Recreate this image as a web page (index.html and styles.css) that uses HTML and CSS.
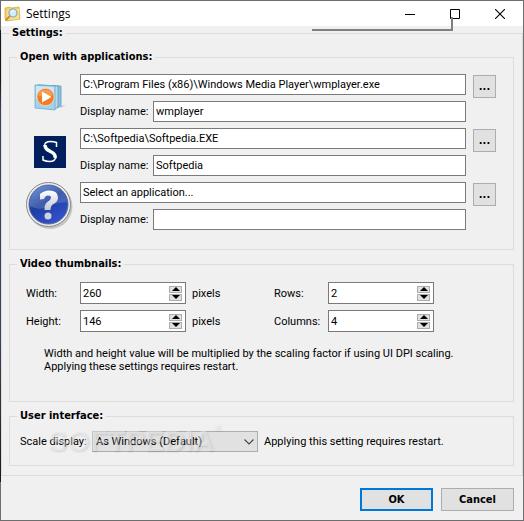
FILE: index.html
```
<!DOCTYPE html>
<html lang="en">
<head>
    <meta charset="UTF-8">
    <meta name="viewport" content="width=device-width, initial-scale=1.0">
    <title>Settings</title>
    <link rel="stylesheet" href="styles.css">
</head>
<body>
    <form class="window">
        <header class="title-bar">
            <svg class="title-icon" width="17" height="16" viewBox="0 0 17 16">
                <path d="M1 2l5-1 1 1 8-1 1 12-13 2-2-2z" fill="#f3cf62" stroke="#d6a63a" stroke-width=".7"/>
                <path d="M3 4l12-1v10L3 14z" fill="#fbe08a"/>
                <path d="M6 10l-4 4" stroke="#c98e3d" stroke-width="2" stroke-linecap="round"/>
                <circle cx="9" cy="7" r="4" fill="#d4ecfb" stroke="#7fa9c9" stroke-width="1.2"/>
                <path d="M7 6q1-2 3-1.500" stroke="#fff" fill="none"/>
            </svg>
            <h1>Settings</h1>
            <div class="window-buttons">
                <button type="button" aria-label="Minimize">
                    <svg width="10" height="10" viewBox="0 0 10 10"><path d="M0 5.500h10" stroke="#000"/></svg>
                </button>
                <button type="button" aria-label="Maximize">
                    <svg width="10" height="10" viewBox="0 0 10 10"><path d="M.5.5h9v9h-9z" fill="none" stroke="#000"/></svg>
                </button>
                <button type="button" aria-label="Close">
                    <svg width="10" height="10" viewBox="0 0 10 10"><path d="M0 0l10 10M10 0L0 10" stroke="#000" stroke-width="1.100"/></svg>
                </button>
            </div>
            <div class="popup-shadow"></div>
        </header>

        <fieldset class="settings">
            <legend>Settings:</legend>

            <fieldset class="group apps">
                <legend>Open with applications:</legend>
                <div class="app">
                    <svg class="app-icon" width="32" height="28" viewBox="0 0 32 28">
                        <path d="M26 22l6-1-5 3z" fill="#c9c9c9"/>
                        <path d="M5 1l22 1v20l-4 2z" fill="#8fc0dc" stroke="#5a9cc0" stroke-width=".8"/>
                        <path d="M3 1l21 1v21l-3 2z" fill="#b9dcec" stroke="#5a9cc0" stroke-width=".8"/>
                        <path d="M1 1l20 1v24L1 24z" fill="#a5d2e8" stroke="#6aaccb" stroke-width=".8"/>
                        <path d="M2 2l18 1v7L2 15z" fill="#cbe8f4"/>
                        <circle cx="11.500" cy="13" r="8.700" fill="#f47b20" stroke="#e4e0dc" stroke-width=".8"/>
                        <path d="M4 11a8 8 0 0 1 15 0q-7 4-15 0z" fill="#f99a50"/>
                        <path d="M8 7.500v11l9.500-5.500z" fill="#fff"/>
                    </svg>
                    <div class="app-fields">
                        <input type="text" aria-label="Application 1" value="C:\Program Files (x86)\Windows Media Player\wmplayer.exe">
                        <div class="name-row">
                            <label for="name-1">Display name:</label>
                            <input type="text" id="name-1" value="wmplayer">
                        </div>
                    </div>
                    <button type="button" class="browse" aria-label="Browse">...</button>
                </div>
                <div class="app">
                    <svg class="app-icon" width="32" height="32" viewBox="0 0 32 32">
                        <path d="M0 0h32v32H0z" fill="#001f5c"/>
                        <path d="M22.500 11V6.500q-3-1-6-1-6 0-6 4.500 0 3.500 5.500 5.500 5.500 2 5.500 5.500 0 4.500-6 4.500-3.500 0-6.500-1.500V20" fill="none" stroke="#fff" stroke-width="1.500"/>
                        <path d="M11 9q0 4 5.500 6.500t4.500 6.500" fill="none" stroke="#fff" stroke-width="3.500"/>
                    </svg>
                    <div class="app-fields">
                        <input type="text" aria-label="Application 2" value="C:\Softpedia\Softpedia.EXE">
                        <div class="name-row">
                            <label for="name-2">Display name:</label>
                            <input type="text" id="name-2" value="Softpedia">
                        </div>
                    </div>
                    <button type="button" class="browse" aria-label="Browse">...</button>
                </div>
                <div class="app">
                    <svg class="app-icon" width="47" height="48" viewBox="0 0 47 48">
                        <defs>
                            <linearGradient id="ball" x1="0" y1="0" x2=".6" y2="1">
                                <stop offset="0" stop-color="#5f86d6"/>
                                <stop offset=".5" stop-color="#1b3f9e"/>
                                <stop offset="1" stop-color="#3450cc"/>
                            </linearGradient>
                            <linearGradient id="mark" x1="0" y1="0" x2="0" y2="1">
                                <stop offset="0" stop-color="#fff"/>
                                <stop offset="1" stop-color="#c4c8d4"/>
                            </linearGradient>
                        </defs>
                        <circle cx="24" cy="24.500" r="22.500" fill="#c4c4c4"/>
                        <circle cx="22.500" cy="22.500" r="22" fill="#eee" stroke="#858585"/>
                        <circle cx="22.500" cy="22.500" r="19.500" fill="url(#ball)" stroke="#52689c"/>
                        <path d="M4 24a18.500 18.500 0 0 1 37-4q-14 1-21 5t-16-1z" fill="#fff" opacity=".16"/>
                        <path d="M14 12q4-3.500 9-3.500 9 0 9 7 0 4-4.500 6.500-3 1.500-3 6h-6q-.5-6 3.500-8.500 3-2 3-4 0-2-3-2t-4 3.500l-4 .5z" fill="url(#mark)"/>
                        <circle cx="22" cy="34" r="3.500" fill="#cfd3de"/>
                    </svg>
                    <div class="app-fields">
                        <input type="text" aria-label="Application 3" value="Select an application...">
                        <div class="name-row">
                            <label for="name-3">Display name:</label>
                            <input type="text" id="name-3" value="">
                        </div>
                    </div>
                    <button type="button" class="browse" aria-label="Browse">...</button>
                </div>
            </fieldset>

            <fieldset class="group thumbs">
                <legend>Video thumbnails:</legend>
                <div class="sizes">
                    <label for="width">Width:</label>
                    <div class="spin">
                        <input type="number" id="width" value="260">
                        <div class="arrows">
                            <button type="button" class="up" aria-label="Increase"></button>
                            <button type="button" class="down" aria-label="Decrease"></button>
                        </div>
                    </div>
                    <span class="unit">pixels</span>
                    <label for="rows">Rows:</label>
                    <div class="spin">
                        <input type="number" id="rows" value="2">
                        <div class="arrows">
                            <button type="button" class="up" aria-label="Increase"></button>
                            <button type="button" class="down" aria-label="Decrease"></button>
                        </div>
                    </div>

                    <label for="height">Height:</label>
                    <div class="spin">
                        <input type="number" id="height" value="146">
                        <div class="arrows">
                            <button type="button" class="up" aria-label="Increase"></button>
                            <button type="button" class="down" aria-label="Decrease"></button>
                        </div>
                    </div>
                    <span class="unit">pixels</span>
                    <label for="columns">Columns:</label>
                    <div class="spin">
                        <input type="number" id="columns" value="4">
                        <div class="arrows">
                            <button type="button" class="up" aria-label="Increase"></button>
                            <button type="button" class="down" aria-label="Decrease"></button>
                        </div>
                    </div>
                </div>
                <p class="note">Width and height value will be multiplied by the scaling factor if using UI DPI scaling.<br>Applying these settings requires restart.</p>
            </fieldset>

            <fieldset class="group interface">
                <legend>User interface:</legend>
                <div class="scale-row">
                    <label for="scale">Scale display:</label>
                    <div class="select-box">
                        <select id="scale">
                            <option>As Windows (Default)</option>
                        </select>
                        <svg width="10" height="6" viewBox="0 0 10 6"><path d="M.5.5L5 5 9.500.5" fill="none" stroke="#444" stroke-width="1.100"/></svg>
                    </div>
                    <span>Applying this setting requires restart.</span>
                    <div class="watermark">SOFTPEDIA<sup>®</sup></div>
                </div>
            </fieldset>
        </fieldset>

        <footer class="actions">
            <button type="submit" class="action default">OK</button>
            <button type="button" class="action">Cancel</button>
        </footer>
    </form>

    <script>
        document.querySelectorAll('.spin').forEach(spin => {
            const input = spin.querySelector('input');
            spin.querySelector('.up').addEventListener('click', () => input.stepUp());
            spin.querySelector('.down').addEventListener('click', () => input.stepDown());
        });

        document.querySelector('.window').addEventListener('submit', e => e.preventDefault());
    </script>
</body>
</html>
```

FILE: styles.css
```
* {
    box-sizing: border-box;
}
body {
    margin: 0;
    padding: 1px;
    min-height: 100vh;
    display: flex;
    background: linear-gradient(to bottom, #6a6669 30px, #1a161e 30px, #1a161e 80px, #39435a 110px, #39435a 340px, #3a3038 400px, #1a161e 482px, #6f6f71 482px) left / 1px 100% no-repeat #6f6d70;
    font-family: Roboto, sans-serif;
    font-size: 11px;
    line-height: 13px;
    color: #000;
}
input, select, button {
    font: inherit;
    color: inherit;
    margin: 0;
    border-radius: 0;
}
.window {
    flex: 1;
    display: flex;
    flex-direction: column;
    background: #f0f0f0;
}

/* Title bar */
.title-bar {
    position: relative;
    display: flex;
    align-items: center;
    height: 25px;
    padding-left: 3px;
    background: #fff;
}
h1 {
    flex: 1;
    margin: 0 0 0 5px;
    font: 12px/16px "Open Sans", sans-serif;
}
.window-buttons {
    display: flex;
    height: 100%;
    padding-right: 1px;
}
.window-buttons button {
    display: flex;
    align-items: center;
    justify-content: center;
    width: 45px;
    padding: 0;
    border: none;
    background: none;
}
.popup-shadow {
    position: absolute;
    top: 16px;
    right: 70px;
    width: 141px;
    height: 14px;
    border: solid #7d827e;
    border-width: 0 2px 2px 0;
    filter: blur(0.5px);
}

/* Group boxes */
fieldset {
    min-width: 0;
    margin: 0;
    border: 1px solid #dcdcdc;
}
legend, .browse, .action {
    font-family: "DejaVu Sans Condensed", "DejaVu Sans", sans-serif;
    font-stretch: condensed;
    font-weight: bold;
}
legend {
    padding: 0 3px;
    line-height: 14px;
}
.settings {
    padding: 10px 8px 9px 7px;
}
.group + .group {
    margin-top: 7px;
}
.group > legend {
    margin-left: -9px;
}
.apps {
    display: flex;
    flex-direction: column;
    gap: 6px;
    padding: 10px 17px 19px 16px;
}
.app {
    display: grid;
    grid-template-columns: 47px 1fr 23px;
    column-gap: 7px;
}
.app-icon {
    align-self: center;
    justify-self: center;
}
.app-fields {
    display: flex;
    flex-direction: column;
    gap: 6px;
}
.name-row {
    display: grid;
    grid-template-columns: 73px 1fr;
    align-items: center;
}
.name-row label {
    white-space: nowrap;
}
input {
    width: 100%;
    min-width: 0;
    height: 21px;
    padding: 0 2px;
    border: 1px solid #7a7a7a;
    background: #fff;
}
.browse {
    height: 23px;
    margin-top: 1px;
    padding: 0;
    border: 1px solid #adadad;
    background: #e1e1e1;
}

/* Video thumbnails */
.thumbs {
    padding: 11px 16px 28px;
}
.sizes {
    display: grid;
    grid-template-columns: 54px 106px 88px 54px 106px;
    row-gap: 6px;
    align-items: center;
}
.unit {
    padding-left: 6px;
}
.spin {
    display: flex;
    align-items: center;
    height: 22px;
    padding-right: 3px;
    border: 1px solid #7a7a7a;
    background: #fff;
}
.spin input {
    flex: 1;
    height: 18px;
    border: none;
    appearance: textfield;
}
.spin input::-webkit-inner-spin-button {
    appearance: none;
    margin: 0;
}
.arrows {
    display: grid;
    gap: 1px;
}
.arrows button {
    display: grid;
    place-items: center;
    width: 13px;
    height: 7px;
    padding: 0;
    border: 1px solid #adadad;
    background: #e1e1e1;
}
.arrows button::before {
    content: "";
    border: solid transparent;
    border-width: 0 4px 4px;
    border-bottom-color: #000;
}
.arrows .down::before {
    border-width: 4px 4px 0;
    border-top-color: #000;
}
.note {
    margin: 15px 0 0 18px;
}

/* User interface */
.interface {
    padding: 8px 10px 13px;
}
.interface > legend {
    margin-left: -3px;
}
.scale-row {
    position: relative;
    display: grid;
    grid-template-columns: 72px 166px 1fr;
    align-items: center;
}
.scale-row label {
    white-space: nowrap;
}
.scale-row span {
    padding-left: 6px;
}
.select-box {
    display: grid;
    align-items: center;
}
.select-box > * {
    grid-area: 1 / 1;
}
.select-box svg {
    justify-self: end;
    margin-right: 4px;
    pointer-events: none;
}
select {
    width: 100%;
    height: 21px;
    padding: 0 3px;
    border: 1px solid #adadad;
    background: #e1e1e1;
    appearance: none;
}
.watermark {
    position: absolute;
    left: 28px;
    top: -7px;
    color: rgba(255, 255, 255, 0.4);
    font: bold 29px/34px "Liberation Sans", sans-serif;
    text-shadow: 1px 1px 2px rgba(0, 0, 0, 0.12);
    pointer-events: none;
}
.watermark sup {
    font-size: 9px;
    line-height: 9px;
    vertical-align: top;
}

/* Buttons */
.actions {
    display: flex;
    justify-content: flex-end;
    gap: 8px;
    padding: 12px 9px 9px;
}
.action {
    width: 73px;
    height: 23px;
    padding: 0;
    border: 1px solid #adadad;
    background: #e1e1e1;
}
.action.default {
    border: 2px solid #0078d7;
}
```
